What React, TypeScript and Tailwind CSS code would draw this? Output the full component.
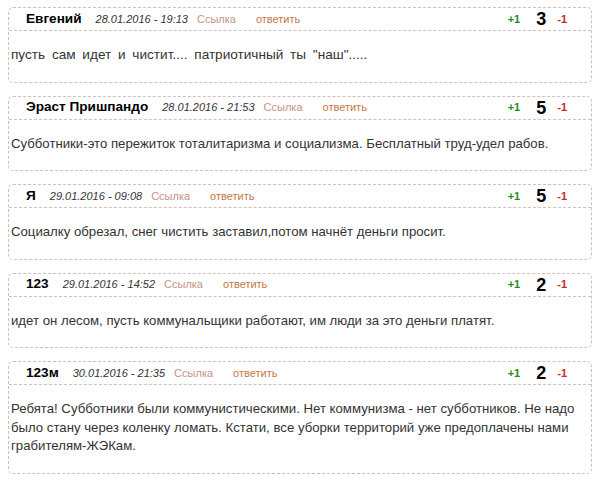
const COMMENTS = [
  {
    name: 'Евгений',
    date: '28.01.2016 - 19:13',
    score: 3,
    text: 'пусть сам идет и чистит.... патриотичный ты "наш".....',
    wide: true,
  },
  {
    name: 'Эраст Пришпандо',
    date: '28.01.2016 - 21:53',
    score: 5,
    text: 'Субботники-это пережиток тоталитаризма и социализма. Бесплатный труд-удел рабов.',
  },
  {
    name: 'Я',
    date: '29.01.2016 - 09:08',
    score: 5,
    text: 'Социалку обрезал, снег чистить заставил,потом начнёт деньги просит.',
  },
  {
    name: '123',
    date: '29.01.2016 - 14:52',
    score: 2,
    text: 'идет он лесом, пусть коммунальщики работают, им люди за это деньги платят.',
  },
  {
    name: '123м',
    date: '30.01.2016 - 21:35',
    score: 2,
    text: 'Ребята! Субботники были коммунистическими. Нет коммунизма - нет субботников. Не надо было стану через коленку ломать. Кстати, все уборки территорий уже предоплачены нами грабителям-ЖЭКам.',
  },
];

export default function App() {
  return (
    <div className="w-[600px] h-[485px] bg-white pl-[8px] pr-[8px] pt-[7px] font-['Liberation_Sans',Arial,sans-serif] overflow-hidden">
      <div className="flex flex-col gap-[13px]">
        {COMMENTS.map((c, i) => (
          <div key={i} className="border border-dashed border-[#d6bfb8] rounded-[5px]">
            {/* Header */}
            <div className="h-[23px] flex items-center border-b border-dashed border-[#d6bfb8] pl-[17px] pr-[24px]">
              <span className="font-bold text-[13.6px] text-black">{c.name}</span>
              <span className="italic text-[11px] text-[#333] ml-[14px]">{c.date}</span>
              <span className="text-[11px] text-[#c49484] ml-[9px]">Ссылка</span>
              <span className="text-[11px] text-[#c47848] ml-[20px]">ответить</span>
              <div className="ml-auto flex items-center">
                <span className="font-bold text-[11px] text-[#2a8a22]">+1</span>
                <span className="font-bold text-[18px] leading-none text-black ml-[16px]">{c.score}</span>
                <span className="font-bold text-[11px] text-[#c42a2a] ml-[11px]">-1</span>
              </div>
            </div>
            {/* Body */}
            <div
              className={
                c.wide
                  ? 'pl-[2px] pr-[8px] pt-[15px] pb-[17px] text-[13.6px] leading-[18.5px] [word-spacing:3px] text-[#333]'
                  : 'pl-[2px] pr-[8px] pt-[15px] pb-[17px] text-[13.2px] leading-[18.5px] text-[#333]'
              }
            >
              {c.text}
            </div>
          </div>
        ))}
      </div>
    </div>
  );
}
